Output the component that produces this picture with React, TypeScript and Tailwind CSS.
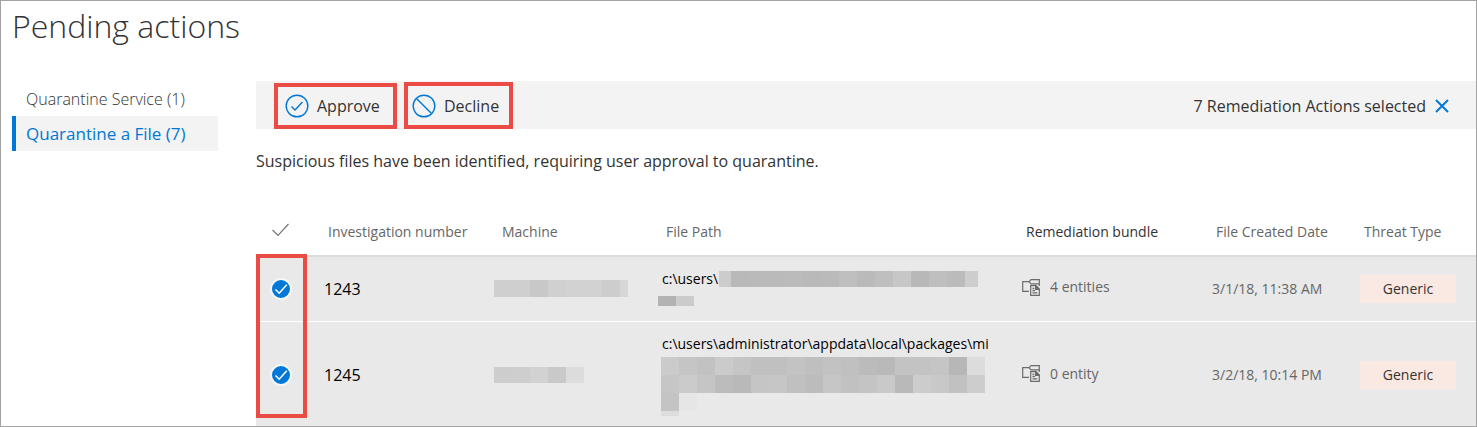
import { useState, type ReactNode } from "react";

type Redaction = { height: number; cells: [width: number, shade: string][] };

function Mosaic({ rows }: { rows: Redaction[] }) {
  return (
    <div aria-hidden="true">
      {rows.map((row, r) => (
        <div key={r} className="flex" style={{ height: row.height }}>
          {row.cells.map(([width, shade], c) => (
            <span key={c} className="shrink-0" style={{ width, backgroundColor: shade }} />
          ))}
        </div>
      ))}
    </div>
  );
}

function even(width: number, shades: string): [number, string][] {
  return shades.split(" ").map((s) => [width, `#${s}${s}${s}`]);
}

function RoundCheck({ label, checked, onChange }: { label: string; checked: boolean; onChange: () => void }) {
  return (
    <span className="grid h-[22px] w-[22px] place-items-center">
      <input
        type="checkbox"
        aria-label={label}
        checked={checked}
        onChange={onChange}
        className="col-start-1 row-start-1 h-[22px] w-[22px] appearance-none rounded-full border-2 border-[#f3f7fb] bg-[#bdbdbd] checked:bg-[#0078d7]"
      />
      <svg viewBox="0 0 22 22" className="pointer-events-none col-start-1 row-start-1 h-[22px] w-[22px]" fill="none" stroke="#fff" strokeWidth="1.6">
        <path d="M5.5 11.5 9.2 15.2 16.8 6.8" />
      </svg>
    </span>
  );
}

function BundleIcon() {
  return (
    <svg viewBox="0 0 18 17" className="h-[17px] w-[18px] shrink-0" fill="none" stroke="#6b6b6b" strokeWidth="1.2">
      <path d="M7 12.4H.7V2.6H7.2L9 .7h8.3v4.2H9L7.2 2.9" />
      <path d="M17.3 4.9v2" />
      <path d="M8.7 6.7h5.3l3.3 3.3v6.3H8.7z" />
      <path d="M13.6 6.8v3.6h3.6z" fill="#6b6b6b" />
      <path d="M10.5 9.5h1.8M10.5 11.7h2.6M10.5 13.8h4.8" strokeWidth="1.3" />
    </svg>
  );
}

type Action = {
  id: string;
  machine: Redaction[];
  path: ReactNode;
  entities: string;
  created: string;
  threat: string;
  rowClass: string;
};

const actions: Action[] = [
  {
    id: "1243",
    machine: [{ height: 17, cells: [...even(18, "cf cf c8 d0 d2 d2 cd"), ...even(8, "d6")] }],
    path: (
      <div>
        <div className="flex h-4 items-center">
          <span className="w-[57px] shrink-0 whitespace-nowrap">c:\users\</span>
          <Mosaic
            rows={[
              {
                height: 16,
                cells: [...even(12, "cc"), ...even(18, "b9 ba ba bb b9 ba bf ba bf c7 b8 bf bb"), ...even(13, "cd")],
              },
            ]}
          />
        </div>
        <div className="-ml-1 pt-[9px]">
          <Mosaic rows={[{ height: 10, cells: even(18, "b3 cb") }]} />
        </div>
      </div>
    ),
    entities: "4 entities",
    created: "3/1/18, 11:38 AM",
    threat: "Generic",
    rowClass: "h-[65px]",
  },
  {
    id: "1245",
    machine: [{ height: 16, cells: even(18, "cd ce d2 c9 dc") }],
    path: (
      <div>
        <div className="pb-[3px] leading-5 whitespace-nowrap">c:\users\administrator\appdata\local\packages\mi</div>
        <div className="-ml-px">
          <Mosaic
            rows={[
              { height: 18, cells: even(18, "cb c5 c2 cb c5 c0 c0 c3 bf c2 c0 bb b9 c3 c3 c5 b7 dc") },
              { height: 18, cells: even(18, "c6 cb c5 bc b9 c5 c6 c0 bc c6 c1 c4 c9 b9 cc c8 c1 cd") },
              { height: 18, cells: even(18, "c4 e6") },
              { height: 5, cells: even(18, "dd") },
            ]}
          />
        </div>
      </div>
    ),
    entities: "0 entity",
    created: "3/2/18, 10:14 PM",
    threat: "Generic",
    rowClass: "h-[105px] [&>td]:pt-[3px]",
  },
];

export default function App() {
  const [selected, setSelected] = useState<string[]>(actions.map((a) => a.id));
  const toggle = (id: string) =>
    setSelected((now) => (now.includes(id) ? now.filter((s) => s !== id) : [...now, id]));
  const all = selected.length === actions.length;

  return (
    <main className="border border-[#a3a3a3] bg-white font-['Open_Sans','Noto_Sans',sans-serif] text-[#333]">
      <h1 className="h-20 pl-[11px] text-[32px] leading-[50px] font-light">Pending actions</h1>

      <div className="flex">
        <nav className="w-[255px] shrink-0 pr-[38px] pl-[11px] leading-[35px]">
          <a href="#service" className="block pl-[14px] text-base leading-[37px] font-light">Quarantine Service (1)</a>
          <a href="#file" aria-current="page" className="mt-[-2px] block border-l-4 border-[#0078d7] bg-[#f3f3f3] pl-[10px] text-[17px] text-[#0078d7]">
            Quarantine a File (7)
          </a>
        </nav>

        <section className="min-w-0 grow">
          <div className="flex h-12 items-end gap-[7px] bg-[#f3f3f3] pl-[18px] text-base">
            <button type="button" className="flex h-[46px] w-[123px] items-center gap-2 border-4 border-[#ea4b45] pl-[7px]">
              <svg viewBox="0 0 24 24" className="h-6 w-6 shrink-0" fill="none" stroke="#0078d7" strokeWidth="1.4">
                <circle cx="12" cy="12" r="10.8" />
                <path d="M6.5 12.4 10 15.9 17.5 8" />
              </svg>
              Approve
            </button>
            <button type="button" className="flex h-[47px] w-[109px] items-center gap-2 border-4 border-[#ea4b45] pl-1">
              <svg viewBox="0 0 24 24" className="h-6 w-6 shrink-0" fill="none" stroke="#0078d7" strokeWidth="1.4">
                <circle cx="12" cy="12" r="10.8" />
                <path d="M4.5 4.5 19.5 19.5" />
              </svg>
              Decline
            </button>
            <div className="ml-auto flex h-[46px] items-center gap-[9px] pr-[27px]">
              <span>7 Remediation Actions selected</span>
              <button type="button" aria-label="Clear selection" onClick={() => setSelected([])}>
                <svg viewBox="0 0 14 14" className="h-[14px] w-[14px]" stroke="#0078d7" strokeWidth="2">
                  <path d="M1 1 13 13M13 1 1 13" />
                </svg>
              </button>
            </div>
          </div>

          <p className="pt-5 text-base leading-6">Suspicious files have been identified, requiring user approval to quarantine.</p>

          <div className="relative mt-9">
            <table className="w-full table-fixed border-collapse text-left">
              <colgroup>
                <col className="w-[68px]" />
                <col className="w-[170px]" />
                <col className="w-[168px]" />
                <col />
                <col className="w-[190px]" />
                <col className="w-[148px]" />
                <col className="w-[116px]" />
              </colgroup>
              <thead>
                <tr className="h-[47px] border-b-2 border-[#dcdcdc] text-sm text-[#666] [&>th]:p-0 [&>th]:font-normal [&>th]:whitespace-nowrap">
                  <th>
                    <span className="ml-[15px] grid h-5 w-5 place-items-center">
                      <input
                        type="checkbox"
                        aria-label="Select all"
                        checked={all}
                        onChange={() => setSelected(all ? [] : actions.map((a) => a.id))}
                        className="col-start-1 row-start-1 h-5 w-5 appearance-none"
                      />
                      <svg viewBox="0 0 20 20" className="pointer-events-none col-start-1 row-start-1 h-5 w-5" fill="none" stroke="#767676" strokeWidth="1.2">
                        <path d="M1.5 8 7 13.5 17.5 2" />
                      </svg>
                    </span>
                  </th>
                  <th><span className="pl-1">Investigation number</span></th>
                  <th><span className="pl-2">Machine</span></th>
                  <th><span className="pl-1">File Path</span></th>
                  <th className="text-[#333]"><span className="pl-1">Remediation bundle</span></th>
                  <th><span className="pl-1">File Created Date</span></th>
                  <th><span className="pl-1">Threat Type</span></th>
                </tr>
              </thead>
              <tbody className="[&>tr+tr]:border-t [&>tr+tr]:border-white">
                {actions.map((a) => (
                  <tr key={a.id} className={`${a.rowClass} bg-[#e9e9e9] [&>td]:p-0`}>
                    <td>
                      <div className="pl-[14px]">
                        <RoundCheck label={`Select ${a.id}`} checked={selected.includes(a.id)} onChange={() => toggle(a.id)} />
                      </div>
                    </td>
                    <td className="text-base text-black">{a.id}</td>
                    <td><Mosaic rows={a.machine} /></td>
                    <td className="text-sm text-black">{a.path}</td>
                    <td className="text-sm text-[#666]">
                      <div className="flex items-center gap-[10px] pb-[3px]">
                        <BundleIcon />
                        {a.entities}
                      </div>
                    </td>
                    <td className="text-sm text-[#666]">{a.created}</td>
                    <td>
                      <span className="block h-7 w-24 bg-[#f9e9e2] text-center text-sm leading-7">{a.threat}</span>
                    </td>
                  </tr>
                ))}
              </tbody>
            </table>
            <div className="pointer-events-none absolute top-[45px] left-0 h-[164px] w-[51px] border-4 border-[#ea4b45]" />
          </div>
        </section>
      </div>
    </main>
  );
}
